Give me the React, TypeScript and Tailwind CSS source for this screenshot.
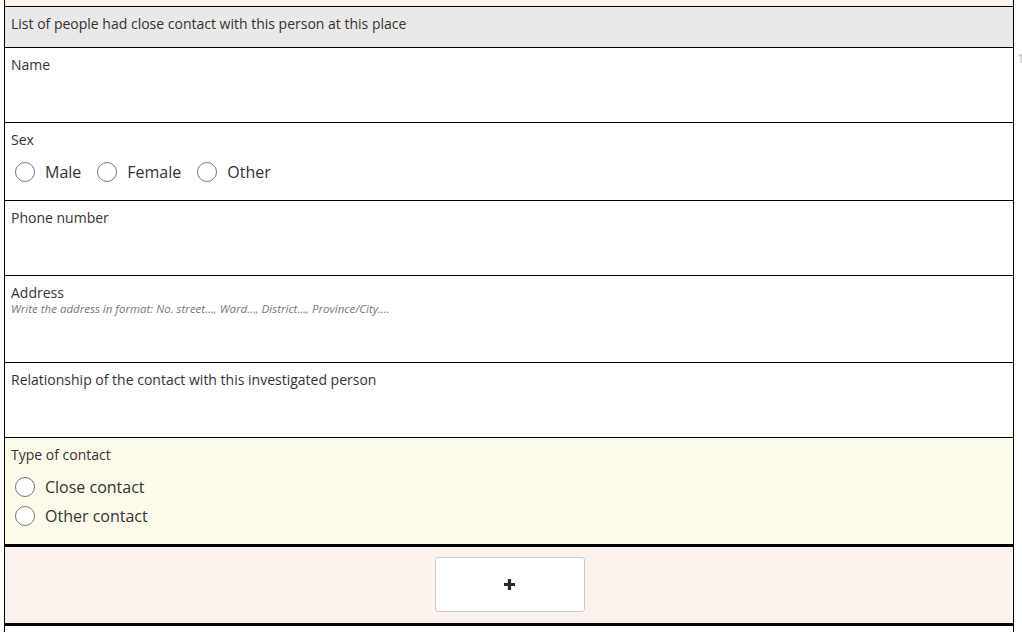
import React from "react";

function Radio({ label }: { label: string }) {
  return (
    <div className="flex items-center">
      <span className="w-[20px] h-[20px] rounded-full border border-[#767676] bg-white shrink-0" />
      <span className="ml-[10px] text-[16px] text-[#333] leading-[20px]">{label}</span>
    </div>
  );
}

export default function App() {
  return (
    <div className="relative w-[1022px] h-[632px] overflow-hidden bg-white font-['Open_Sans',sans-serif] text-[#333]">
      <div className="ml-[4px] w-[1010px] h-[632px] border-x border-black">
        <div className="h-[7px] bg-[#fbf2ec] border-b border-black" />
        <div className="h-[41px] bg-[#e9e9e9] border-b border-black px-[6px] pt-[7px] text-[14px] leading-[19px]">
          List of people had close contact with this person at this place
        </div>
        <div className="h-[75px] border-b border-black px-[6px] pt-[8px] text-[14px] leading-[18px]">Name</div>
        <div className="h-[78px] border-b border-black px-[6px] pt-[8px]">
          <div className="text-[14px] leading-[18px]">Sex</div>
          <div className="mt-[13px] ml-[4px] flex items-center gap-[16px]">
            <Radio label="Male" />
            <Radio label="Female" />
            <Radio label="Other" />
          </div>
        </div>
        <div className="h-[75px] border-b border-black px-[6px] pt-[8px] text-[14px] leading-[18px]">Phone number</div>
        <div className="h-[87px] border-b border-black px-[6px] pt-[8px]">
          <div className="text-[14px] leading-[18px]">Address</div>
          <div className="text-[11.5px] italic text-[#777] leading-[13px]">
            Write the address in format: No. street..., Ward..., District..., Province/City....
          </div>
        </div>
        <div className="h-[75px] border-b border-black px-[6px] pt-[8px] text-[14px] leading-[18px]">
          Relationship of the contact with this investigated person
        </div>
        <div className="h-[109px] bg-[#fefaea] border-b-[3px] border-black px-[6px] pt-[8px]">
          <div className="text-[14px] leading-[18px]">Type of contact</div>
          <div className="mt-[13px] ml-[4px] flex flex-col gap-[9px]">
            <Radio label="Close contact" />
            <Radio label="Other contact" />
          </div>
        </div>
        <div className="h-[79px] bg-[#fbf2ec] border-b-[3px] border-black flex justify-center pt-[10px]">
          <button className="ml-[1px] w-[150px] h-[55px] bg-white border border-[#cccccc] rounded-[3px] flex items-center justify-center">
            <svg width="13" height="13" viewBox="0 0 13 13">
              <path d="M6.5 1v11M1 6.5h11" stroke="#2a2a2a" strokeWidth="3.2" />
            </svg>
          </button>
        </div>
      </div>
      <span className="absolute left-[1017px] top-[50px] text-[13px] leading-[16px] text-[#bbb]">1</span>
    </div>
  );
}
